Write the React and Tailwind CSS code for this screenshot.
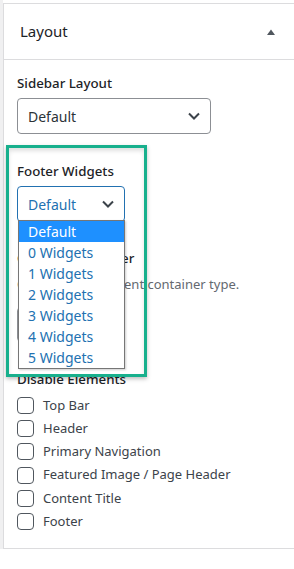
import React from "react";

function Chevron({ className = "" }) {
  return (
    <svg width="14" height="10" viewBox="0 0 14 10" className={className}>
      <path d="M2 2.5 L7 7.5 L12 2.5" fill="none" stroke="#3c434a" strokeWidth="2" />
    </svg>
  );
}

function Checkbox({ label }) {
  return (
    <div className="flex items-center h-[23.2px]">
      <div className="w-[17px] h-[17px] rounded-[4px] border border-[#50575e] bg-white shrink-0" />
      <span className="ml-[9px] text-[13px] text-[#3c434a]">{label}</span>
    </div>
  );
}

export default function App() {
  const options = ["Default", "0 Widgets", "1 Widgets", "2 Widgets", "3 Widgets", "4 Widgets", "5 Widgets"];
  return (
    <div
      className="relative w-[294px] h-[569px] bg-white overflow-hidden"
      style={{ fontFamily: '"Noto Sans", "Open Sans", sans-serif' }}
    >
      <div className="flex h-[549px]">
        <div className="w-[3px] bg-[#f0f0f1] shrink-0" />
        <div className="flex-1 pt-[3px] flex flex-col">
          <div className="flex-1 bg-white border-l border-t border-b border-[#dcdcde] flex flex-col">
            <div className="h-[56px] flex items-center justify-between pl-[16px] pr-[18px] border-b border-[#dcdcde]">
              <span className="text-[15px] text-[#1d2327]">Layout</span>
              <svg width="10" height="8" viewBox="0 0 10 8">
                <path d="M1 7 L5 1.5 L9 7 Z" fill="#50575e" />
              </svg>
            </div>
            <div className="pl-[13px] pt-[14px]">
              <div className="text-[13.3px] font-medium text-[#1d2327] leading-[18px]">Sidebar Layout</div>
              <div className="mt-[6px] w-[194px] h-[36px] rounded-[4px] border border-[#8c8f94] flex items-center justify-between pl-[10px] pr-[9px]">
                <span className="text-[14px] text-[#2c3338]">Default</span>
                <Chevron />
              </div>

              <div className="mt-[28px] text-[13.3px] font-medium text-[#1d2327] leading-[18px]">Footer Widgets</div>
              <div className="mt-[6px] w-[108px] h-[36px] rounded-[4px] border border-[#2271b1] flex items-center justify-between pl-[10px] pr-[9px]">
                <span className="text-[14px] text-[#2271b1]">Default</span>
                <Chevron />
              </div>

              <div className="mt-[27px] text-[13.3px] font-medium text-[#1d2327] leading-[18px]">Content Container</div>
              <div className="mt-[8px] text-[13px] text-[#646970] leading-[18px]">Choose your content container type.</div>
              <div className="mt-[14px] w-[108px] h-[35px] rounded-[4px] border border-[#8c8f94] flex items-center justify-between pl-[10px] pr-[9px]">
                <span className="text-[14px] text-[#2c3338]">Default</span>
                <Chevron />
              </div>

              <div className="mt-[28px] text-[13.3px] font-medium text-[#1d2327] leading-[18px]">Disable Elements</div>
              <div className="mt-[6px] flex flex-col">
                <Checkbox label="Top Bar" />
                <Checkbox label="Header" />
                <Checkbox label="Primary Navigation" />
                <Checkbox label="Featured Image / Page Header" />
                <Checkbox label="Content Title" />
                <Checkbox label="Footer" />
              </div>
            </div>
          </div>
        </div>
      </div>

      {/* highlight annotation */}
      <div className="absolute left-[6px] top-[145px] w-[141px] h-[232px] border-[3px] border-[#18b08d] shadow-[0_2px_4px_rgba(0,0,0,0.25),inset_0_3px_4px_rgba(0,0,0,0.12)] pointer-events-none" />

      {/* open dropdown list */}
      <div className="absolute left-[18px] top-[220px] w-[107px] bg-white border border-[#767676] shadow-[1px_1px_2px_rgba(0,0,0,0.2)]">
        {options.map((o, i) => (
          <div
            key={o}
            className={
              i === 0
                ? "h-[21px] flex items-center pl-[9px] text-[14px] bg-[#1e90ff] text-white"
                : "h-[21px] flex items-center pl-[9px] text-[14px] text-[#2271b1]"
            }
          >
            {o}
          </div>
        ))}
      </div>
    </div>
  );
}
